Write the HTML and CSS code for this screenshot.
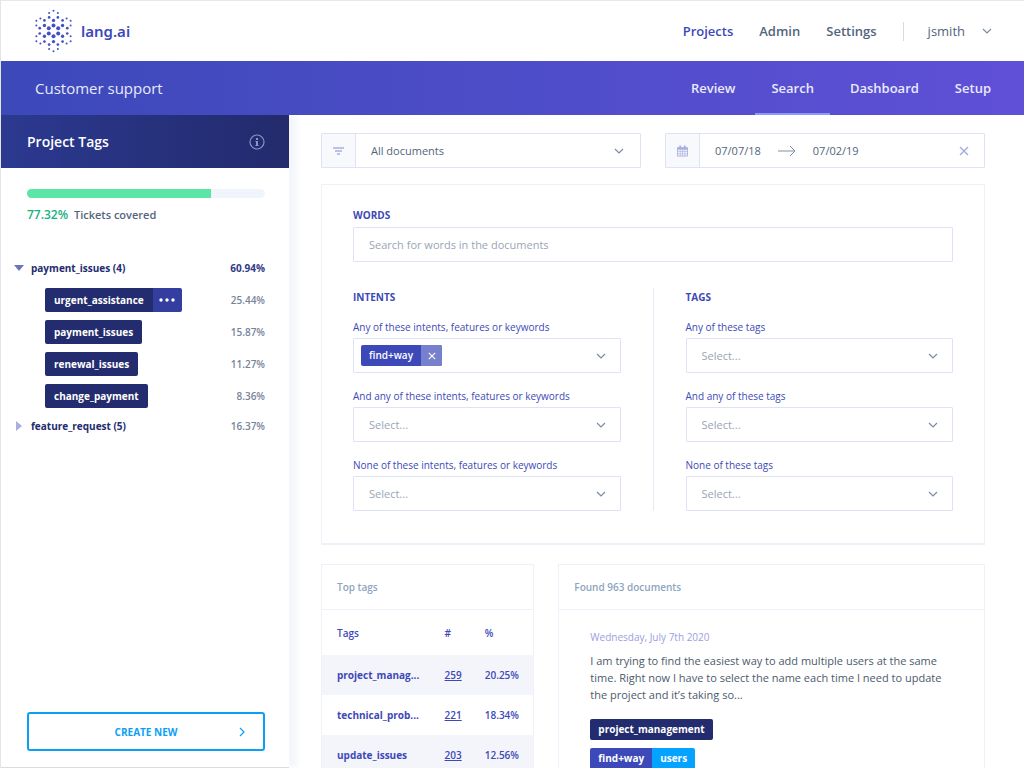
FILE: index.html
```html
<!DOCTYPE html>
<html lang="en">
<head>
<meta charset="utf-8">
<meta name="viewport" content="width=device-width, initial-scale=1">
<title>lang.ai – Customer support</title>
<link rel="stylesheet" href="styles.css">
</head>
<body>
<svg class="defs" width="0" height="0" aria-hidden="true">
  <symbol id="chevron" viewBox="0 0 10 6"><path d="M1 1l4 4 4-4" fill="none" stroke="currentColor" stroke-width="1.2"/></symbol>
  <symbol id="cross" viewBox="0 0 10 10"><path d="M1 1l8 8M9 1L1 9" fill="none" stroke="currentColor" stroke-width="1.4"/></symbol>
</svg>
<div class="app">
  <header class="topbar">
    <a class="brand" href="#">
      <svg class="brand-mark" viewBox="102 27 116 131" aria-hidden="true">
        <g class="dots">
          <g><circle cx="160" cy="32" r="3"/><circle cx="147" cy="39" r="3"/><circle cx="173" cy="39" r="3"/><circle cx="121" cy="55" r="3"/><circle cx="199" cy="55" r="3"/><circle cx="109" cy="62" r="3"/><circle cx="211" cy="62" r="3"/><circle cx="109" cy="76" r="3"/><circle cx="211" cy="76" r="3"/><circle cx="109" cy="108" r="3"/><circle cx="211" cy="108" r="3"/><circle cx="109" cy="123" r="3"/><circle cx="211" cy="123" r="3"/><circle cx="121" cy="130" r="3"/><circle cx="199" cy="130" r="3"/><circle cx="147" cy="146" r="3"/><circle cx="173" cy="146" r="3"/><circle cx="160" cy="153" r="3"/></g>
          <g><circle cx="147" cy="52" r="4"/><circle cx="173" cy="52" r="4"/><circle cx="133" cy="61" r="4"/><circle cx="187" cy="61" r="4"/><circle cx="119" cy="84" r="4"/><circle cx="201" cy="84" r="4"/><circle cx="119" cy="100" r="4"/><circle cx="201" cy="100" r="4"/><circle cx="133" cy="124" r="4"/><circle cx="187" cy="124" r="4"/><circle cx="147" cy="133" r="4"/><circle cx="173" cy="133" r="4"/></g>
          <g><circle cx="160" cy="61" r="5"/><circle cx="133" cy="76" r="5"/><circle cx="187" cy="76" r="5"/><circle cx="133" cy="108" r="5"/><circle cx="187" cy="108" r="5"/><circle cx="160" cy="124" r="5"/></g>
          <g><circle cx="160" cy="76" r="6"/><circle cx="146" cy="84" r="6"/><circle cx="174" cy="84" r="6"/><circle cx="146" cy="100" r="6"/><circle cx="174" cy="100" r="6"/><circle cx="160" cy="108" r="6"/></g>
        </g>
      </svg>
      <span class="brand-name">lang.ai</span>
    </a>
    <nav class="mainnav" aria-label="Main">
      <a class="active" href="#">Projects</a>
      <a href="#">Admin</a>
      <a href="#">Settings</a>
    </nav>
    <button class="user" type="button">jsmith <svg class="chev" aria-hidden="true"><use href="#chevron"/></svg></button>
  </header>

  <div class="projectbar">
    <h1>Customer support</h1>
    <nav class="tabs" aria-label="Project">
      <a href="#">Review</a>
      <a class="current" href="#" aria-current="page">Search</a>
      <a href="#">Dashboard</a>
      <a href="#">Setup</a>
    </nav>
  </div>

  <div class="body">
    <aside class="sidebar">
      <div class="side-head">
        <h2>Project Tags</h2>
        <button class="info" type="button" aria-label="Information">
          <svg viewBox="0 0 16 16" aria-hidden="true"><circle cx="8" cy="8" r="7" fill="none" stroke="currentColor" stroke-width="1.2"/><path d="M7 4h2v2H7zM6.500 7H9v4h.6v1H6.400v-1H7V8h-.5z" fill="currentColor"/></svg>
        </button>
      </div>
      <div class="side-body">
        <div class="meter"><div class="meter-fill" style="width:77.32%"></div></div>
        <p class="covered"><strong>77.32%</strong> Tickets covered</p>
        <ul class="tree">
          <li class="row group"><button type="button" class="toggle"><span class="tri open"></span>payment_issues (4)</button><span class="pct total">60.94%</span></li>
          <li class="row"><span class="split"><span class="tag">urgent_assistance</span><button class="more" type="button" aria-label="More"><svg viewBox="0 0 16 4" aria-hidden="true"><circle cx="2" cy="2" r="1.700"/><circle cx="8" cy="2" r="1.700"/><circle cx="14" cy="2" r="1.700"/></svg></button></span><span class="pct">25.44%</span></li>
          <li class="row"><span class="tag">payment_issues</span><span class="pct">15.87%</span></li>
          <li class="row"><span class="tag">renewal_issues</span><span class="pct">11.27%</span></li>
          <li class="row"><span class="tag">change_payment</span><span class="pct">8.36%</span></li>
          <li class="row group last"><button type="button" class="toggle"><span class="tri"></span>feature_request (5)</button><span class="pct">16.37%</span></li>
        </ul>
        <button class="create" type="button"><span>CREATE NEW</span><svg viewBox="0 0 6 10" aria-hidden="true"><path d="M1 1l4 4-4 4" fill="none" stroke="currentColor" stroke-width="1.200"/></svg></button>
      </div>
    </aside>

    <main class="content">
      <div class="filters">
        <div class="addon-field">
          <span class="addon"><svg class="ico-filter" viewBox="0 0 11 8" aria-hidden="true"><path d="M0 1h11M2 4h7M4 7h3" stroke="currentColor" stroke-width="1.300"/></svg></span>
          <div class="select plain">
            <select aria-label="Documents"><option>All documents</option></select>
            <svg class="chev" aria-hidden="true"><use href="#chevron"/></svg>
          </div>
        </div>
        <div class="addon-field">
          <span class="addon"><svg class="ico-cal" viewBox="0 0 12 12" aria-hidden="true"><path d="M.5 2.500h11v9H.5z" fill="none" stroke="currentColor"/><path d="M.5 2h11v2.500H.5zM2.500 0h2v3h-2zM7.500 0h2v3h-2z" fill="currentColor"/><path d="M3.500 4v7.500M6 4v7.500M8.500 4v7.500M.5 6.500h11M.5 9h11" stroke="currentColor" stroke-width=".7"/></svg></span>
          <div class="dates">
            <button type="button">07/07/18</button>
            <svg class="arrow" viewBox="0 0 18 12" aria-hidden="true"><path d="M0 6h17M12 1l5 5-5 5" fill="none" stroke="currentColor"/></svg>
            <button type="button">07/02/19</button>
            <button class="clear" type="button" aria-label="Clear dates"><svg aria-hidden="true"><use href="#cross"/></svg></button>
          </div>
        </div>
      </div>

      <section class="panel">
        <label class="heading" for="words">WORDS</label>
        <input class="words" id="words" type="text" placeholder="Search for words in the documents">
        <div class="columns">
          <fieldset>
            <legend class="heading">INTENTS</legend>
            <label for="i1">Any of these intents, features or keywords</label>
            <div class="select multi">
              <span class="chip"><span>find+way</span><button type="button" aria-label="Remove find+way"><svg aria-hidden="true"><use href="#cross"/></svg></button></span>
              <input id="i1" type="text">
              <svg class="chev" aria-hidden="true"><use href="#chevron"/></svg>
            </div>
            <label for="i2">And any of these intents, features or keywords</label>
            <div class="select"><select id="i2"><option>Select...</option></select><svg class="chev" aria-hidden="true"><use href="#chevron"/></svg></div>
            <label for="i3">None of these intents, features or keywords</label>
            <div class="select"><select id="i3"><option>Select...</option></select><svg class="chev" aria-hidden="true"><use href="#chevron"/></svg></div>
          </fieldset>
          <div class="divider"></div>
          <fieldset>
            <legend class="heading">TAGS</legend>
            <label for="t1">Any of these tags</label>
            <div class="select"><select id="t1"><option>Select...</option></select><svg class="chev" aria-hidden="true"><use href="#chevron"/></svg></div>
            <label for="t2">And any of these tags</label>
            <div class="select"><select id="t2"><option>Select...</option></select><svg class="chev" aria-hidden="true"><use href="#chevron"/></svg></div>
            <label for="t3">None of these tags</label>
            <div class="select"><select id="t3"><option>Select...</option></select><svg class="chev" aria-hidden="true"><use href="#chevron"/></svg></div>
          </fieldset>
        </div>
      </section>

      <div class="results">
        <section class="card">
          <h3>Top tags</h3>
          <table>
            <thead><tr><th>Tags</th><th>#</th><th>%</th></tr></thead>
            <tbody>
              <tr><td>project_manag...</td><td><a href="#">259</a></td><td>20.25%</td></tr>
              <tr><td>technical_prob...</td><td><a href="#">221</a></td><td>18.34%</td></tr>
              <tr><td>update_issues</td><td><a href="#">203</a></td><td>12.56%</td></tr>
            </tbody>
          </table>
        </section>
        <section class="card">
          <h3>Found 963 documents</h3>
          <article>
            <time datetime="2020-07-07">Wednesday, July 7th 2020</time>
            <p>I am trying to find the easiest way to add multiple users at the same time. Right now I have to select the name each time I need to update the project and it’s taking so...</p>
            <div class="labels">
              <span class="label">project_management</span>
              <span class="pair"><span class="label intent">find+way</span><span class="label feature">users</span></span>
            </div>
          </article>
        </section>
      </div>
    </main>
  </div>
</div>
</body>
</html>
```
FILE: styles.css
```css
* { box-sizing: border-box; }

:root {
  --indigo: #3d49b8;
  --navy: #232c6e;
  --slate: #53657d;
  --line: #dfe1f5;
  --line-soft: #eff0fa;
}

body {
  margin: 0;
  font-family: "Open Sans", "Noto Sans", sans-serif;
  font-size: 11px;
  color: var(--slate);
  background: #fff;
}

button, input, select { font: inherit; color: inherit; }
button { padding: 0; border: 0; background: none; cursor: pointer; }
a { color: inherit; text-decoration: none; }
h1, h2, h3, p, ul { margin: 0; padding: 0; font-weight: inherit; }
ul { list-style: none; }
svg { display: block; }
.defs { position: absolute; }

.app {
  display: flex;
  flex-direction: column;
  height: 100vh;
  border-top: 1px solid #e8e8ea;
  border-left: 1px solid #e4e4e8;
}

.topbar {
  display: flex;
  align-items: center;
  flex: none;
  height: 60px;
  padding: 0 32px 0 33px;
}
.brand { display: flex; align-items: center; gap: 8px; margin-right: auto; color: var(--indigo); }
.brand-mark { width: 39px; height: 44px; }
.dots { fill: #4350c4; }
.brand-name { font-family: "Noto Sans", sans-serif; font-size: 15px; font-weight: 600; }
.mainnav { display: flex; gap: 26px; font-size: 13px; font-weight: 600; }
.mainnav .active { color: var(--indigo); }
.user {
  display: flex;
  align-items: center;
  gap: 17px;
  height: 19px;
  margin-left: 26px;
  padding-left: 24px;
  border-left: 1px solid #cfdceb;
  font-size: 13px;
}
.chev { width: 10px; height: 6px; color: #7d8ba0; }

.projectbar {
  display: flex;
  justify-content: space-between;
  flex: none;
  height: 54px;
  padding: 0 33px 0 34px;
  color: #e9eafc;
  background: linear-gradient(90deg, #3c49b9, #5f50d7);
}
.projectbar h1 { align-self: center; font-size: 15px; }
.tabs { display: flex; gap: 4px; margin-right: -16px; font-size: 13px; font-weight: 600; }
.tabs a { display: flex; align-items: center; padding: 2px 16px 0; border-bottom: 2px solid transparent; }
.tabs .current { border-color: #8d98fa; }

.body { display: flex; flex: 1; min-height: 0; overflow: hidden; }

.sidebar {
  display: flex;
  flex-direction: column;
  flex: none;
  width: 288px;
  border-bottom: 1px solid #dcdce0;
  box-shadow: 8px 0 6px #f5f6fa;
}
.side-head {
  display: flex;
  align-items: center;
  justify-content: space-between;
  height: 53px;
  padding: 0 24px 0 26px;
  color: #fff;
  background: linear-gradient(90deg, #2b3990, #232b6c);
}
.side-head h2 { font-size: 14px; font-weight: 600; }
.info { color: #8b93c8; }
.info svg { width: 16px; height: 16px; }
.side-body { display: flex; flex-direction: column; flex: 1; padding: 21px 24px 16px 26px; }
.meter { height: 9px; border-radius: 5px; overflow: hidden; background: #f0f5fb; }
.meter-fill { height: 100%; background: #5ce6a5; }
.covered { margin-top: 8px; font-weight: 600; line-height: 18px; }
.covered strong { margin-right: 3px; font-size: 12px; font-weight: 600; color: #17b07f; }
.tree { margin-top: 28px; font-size: 10px; }
.row { display: flex; align-items: center; justify-content: space-between; height: 32px; padding-left: 18px; }
.row.group { margin-left: -13px; padding-left: 0; }
.row.last { height: 28px; }
.toggle { display: flex; align-items: center; font-size: 10px; font-weight: 700; color: var(--navy); }
.tri { width: 17px; }
.tri::before {
  content: "";
  display: block;
  width: 6px;
  height: 10px;
  margin-left: 2px;
  background: #a9b0dd;
  clip-path: polygon(0 0, 100% 50%, 0 100%);
}
.tri.open::before { width: 10px; height: 6px; margin-left: 0; background: #6c76bd; clip-path: polygon(0 0, 100% 0, 50% 100%); }
.pct { font-weight: 600; color: #76849a; }
.pct.total { font-weight: 700; color: #303b85; }
.split { display: flex; }
.tag {
  display: flex;
  align-items: center;
  height: 24px;
  padding: 0 9px;
  border-radius: 2px;
  font-weight: 700;
  color: #fff;
  background: var(--navy);
}
.split .tag { border-radius: 2px 0 0 2px; }
.more { display: grid; place-items: center; width: 29px; border-radius: 0 2px 2px 0; background: #343e9e; }
.more svg { width: 16px; height: 4px; fill: #fff; }
.create {
  display: grid;
  grid-template-columns: 1fr auto 1fr;
  align-items: center;
  height: 39px;
  margin-top: auto;
  padding: 0 18px;
  border: 2px solid #0a9ff5;
  border-radius: 3px;
  font-size: 10px;
  font-weight: 700;
  color: #0a9ff5;
}
.create span { grid-column: 2; }
.create svg { width: 6px; height: 10px; justify-self: end; }

.content {
  flex: 1;
  min-width: 0;
  padding: 18px 39px 24px 32px;
  overflow-y: auto;
  scrollbar-width: none;
}
.filters { display: grid; grid-template-columns: 1fr 1fr; gap: 24px; }
.addon-field { display: flex; height: 35px; border: 1px solid var(--line); border-radius: 1px; }
.addon { display: grid; place-items: center; width: 34px; border-right: 1px solid var(--line); color: #a9b0e0; background: #f7f9fc; }
.ico-filter { width: 11px; height: 8px; }
.ico-cal { width: 11px; height: 12px; }
.dates { display: flex; align-items: center; flex: 1; gap: 17px; padding: 0 15px; }
.arrow { width: 18px; height: 12px; color: #8290a4; }
.clear { margin-left: auto; color: #a3abdc; }
.clear svg { width: 10px; height: 10px; }

.select { display: grid; align-items: center; height: 35px; border: 1px solid var(--line); border-radius: 1px; }
.select select {
  grid-area: 1 / 1;
  width: 100%;
  height: 100%;
  padding: 0 15px;
  border: 0;
  appearance: none;
  color: #9aa5b5;
  background: none;
}
.select .chev { grid-area: 1 / 1; justify-self: end; margin-right: 14px; pointer-events: none; }
.select.plain { flex: 1; height: auto; border: 0; }
.select.plain select { color: var(--slate); }
.select.plain .chev { margin-right: 16px; }
.select.multi { display: flex; padding-left: 7px; }
.multi input { flex: 1; min-width: 0; border: 0; outline: 0; background: none; }

.chip { display: flex; height: 21px; border-radius: 2px; overflow: hidden; font-size: 10px; font-weight: 600; line-height: 21px; color: #fff; background: var(--indigo); }
.chip span { padding: 0 8px; }
.chip button { display: grid; place-items: center; width: 21px; background: #7680cd; }
.chip svg { width: 8px; height: 8px; }

.panel {
  margin-top: 16px;
  padding: 21px 31px 32px;
  border: 1px solid var(--line-soft);
  border-bottom-width: 2px;
}
.heading { display: block; padding: 0; font-size: 10px; font-weight: 700; line-height: 18px; color: var(--indigo); }
.words {
  display: block;
  width: 100%;
  height: 35px;
  margin-top: 3px;
  padding: 0 15px;
  border: 1px solid var(--line);
  border-radius: 1px;
}
.words::placeholder { color: #9aa5b5; }
.columns { display: grid; grid-template-columns: 1fr 1px 1fr; gap: 32px; margin-top: 26px; }
.divider { background: #e6e8f5; }
fieldset { min-width: 0; margin: 0; padding: 0; border: 0; }
fieldset label { display: block; margin: 16px 0 4px; font-size: 10px; font-weight: 500; line-height: 14px; color: var(--indigo); }
fieldset .heading + label { margin-top: 14px; }

.results { display: grid; grid-template-columns: 1fr 2fr; gap: 24px; margin-top: 19px; }
.card { min-width: 0; border: 1px solid var(--line-soft); }
.card h3 { padding: 0 15px; border-bottom: 1px solid var(--line-soft); font-size: 10px; font-weight: 600; line-height: 44px; color: #8ea5c0; }
table { width: 100%; border-collapse: collapse; font-size: 10px; font-weight: 600; color: var(--indigo); }
th, td { height: 40px; padding: 0; text-align: left; }
th { height: 45px; font-weight: 600; }
th:first-child, td:first-child { width: 58%; padding-left: 15px; }
td:first-child { font-weight: 700; }
td:nth-child(2), th:nth-child(2) { width: 19%; }
td a { text-decoration: underline; }
tbody tr:nth-child(odd) { background: #f4f5fb; }
article { padding: 20px 31px; }
time { display: block; font-size: 10px; line-height: 14px; color: #9aa0e0; }
article p { margin-top: 8px; line-height: 17px; color: #4c5a6c; }
.labels { display: flex; flex-direction: column; align-items: flex-start; gap: 8px; margin-top: 16px; }
.label { display: block; padding: 0 8px; border-radius: 2px; font-size: 10px; font-weight: 700; line-height: 21px; color: #fff; background: var(--navy); }
.pair { display: flex; border-radius: 2px; overflow: hidden; }
.pair .label { border-radius: 0; }
.label.intent { background: var(--indigo); }
.label.feature { background: #04a3ff; }
```
